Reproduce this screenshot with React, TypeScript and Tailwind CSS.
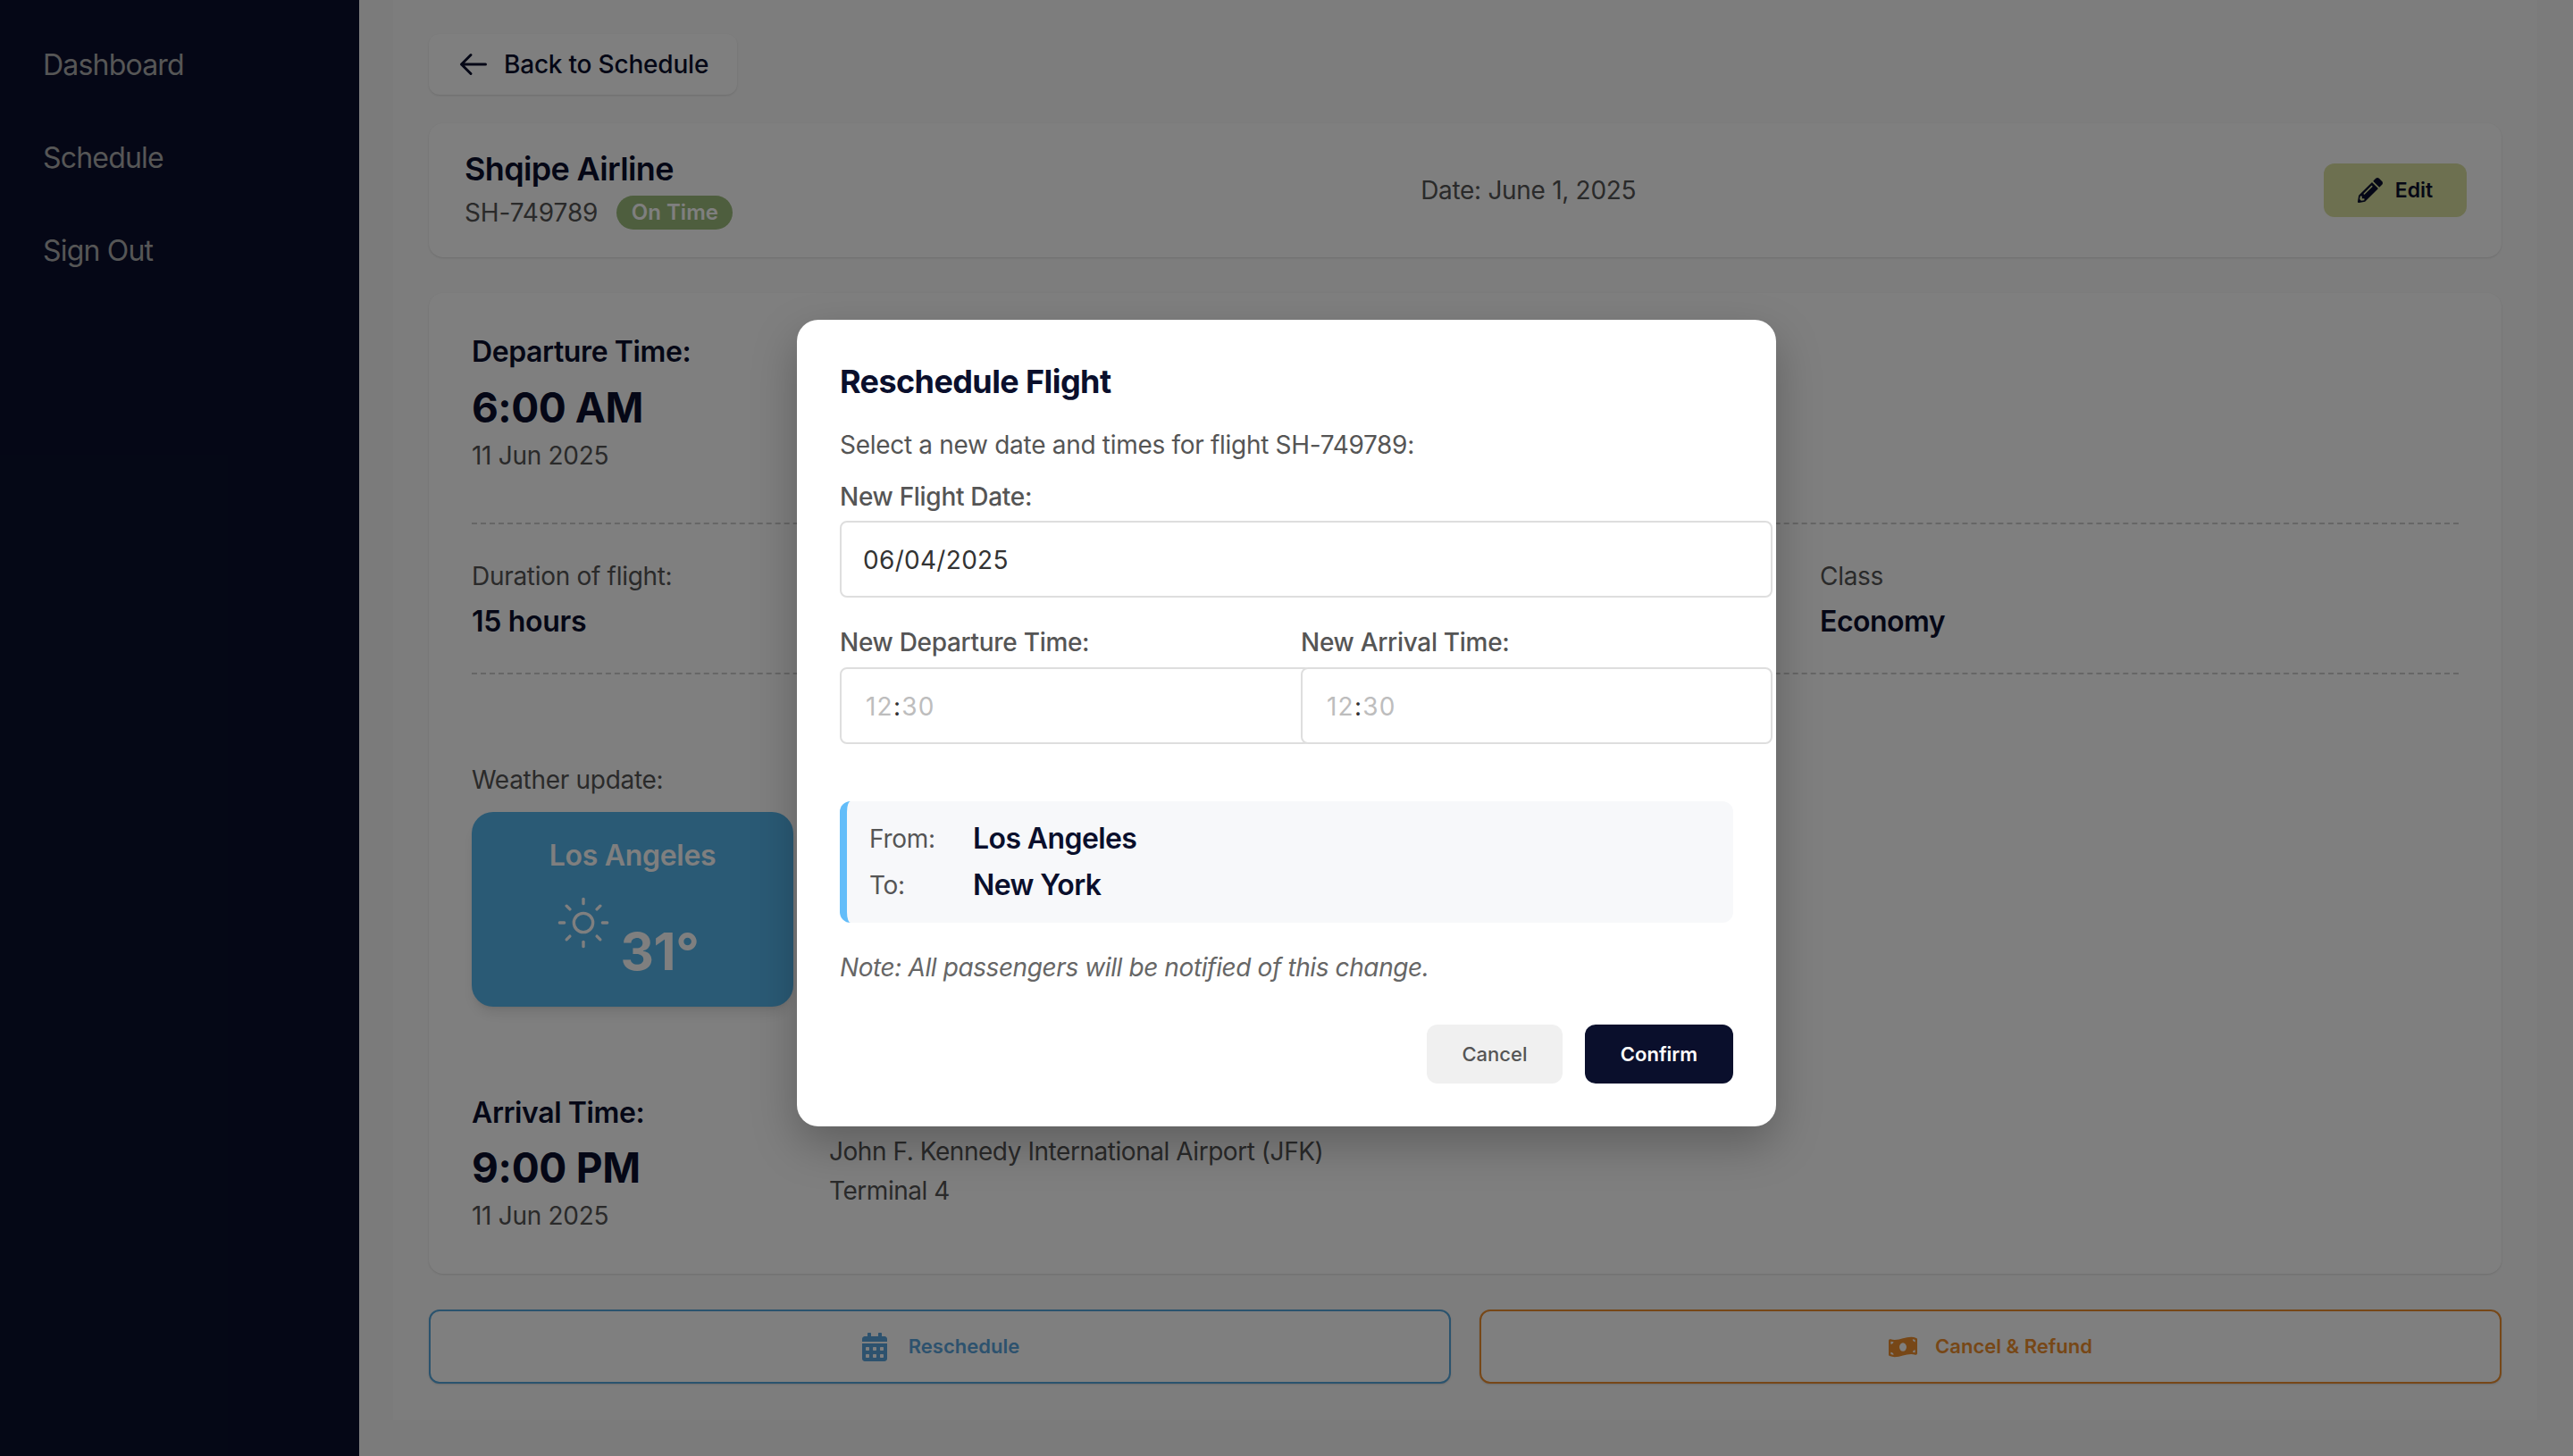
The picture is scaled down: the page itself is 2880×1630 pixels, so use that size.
import { Sun } from 'lucide-react';
import { FaCalendarAlt, FaMoneyBillWave, FaPencilAlt } from 'react-icons/fa';
import { HiOutlineArrowLeft } from 'react-icons/hi';

const navItems = ['Dashboard', 'Schedule', 'Sign Out'];

const TimeField = () => (
  <div className="box-content h-[82px] w-full rounded-lg border-2 border-[#dedede] bg-white pl-[27px] pr-[13px] text-[28px] leading-[84px] tracking-[1.2px] text-[#bdbdbd]">
    12<span className="text-[#333]">:</span>30
  </div>
);

const RescheduleModal = () => (
  <div className="absolute inset-0 flex items-center justify-center bg-black/50 pb-[11px]">
    <div className="w-[1096px] rounded-3xl bg-white px-12 pb-12 pt-[47px] shadow-[0_20px_50px_rgba(0,0,0,0.25)]">
      <h2 className="text-[36px] font-bold leading-[44px] tracking-[-0.6px] text-[#0a0f2c]">Reschedule Flight</h2>
      <p className="mt-[31px] text-[28px] leading-9 text-[#555]">Select a new date and times for flight SH-749789:</p>
      <div className="mt-[22px] text-[28px] font-medium leading-9 text-[#555]">New Flight Date:</div>
      <div className="mt-[9px] box-content h-[82px] w-full rounded-lg border-2 border-[#dedede] pl-6 pr-4 text-[28px] leading-[84px] tracking-[0.3px] text-[#333]">
        06/04/2025
      </div>
      <div className="mt-8 grid grid-cols-2 gap-x-8">
        <div>
          <div className="text-[28px] font-medium leading-9 text-[#555]">New Departure Time:</div>
          <div className="mt-[10px]">
            <TimeField />
          </div>
        </div>
        <div className="relative">
          <div className="text-[28px] font-medium leading-9 text-[#555]">New Arrival Time:</div>
          <div className="mt-[10px]">
            <TimeField />
          </div>
        </div>
      </div>
      <div className="mt-16 rounded-xl border-l-8 border-[#63bdf9] bg-[#f7f8fa] pb-[22px] pl-[25px] pt-[22px]">
        <div className="flex items-center">
          <span className="w-[116px] text-[28px] leading-10 text-[#555]">From:</span>
          <span className="text-[32px] font-semibold leading-10 tracking-[-0.6px] text-[#0a0f2c]">Los Angeles</span>
        </div>
        <div className="mt-3 flex items-center">
          <span className="w-[116px] text-[28px] leading-10 text-[#555]">To:</span>
          <span className="text-[32px] font-semibold leading-10 tracking-[-0.6px] text-[#0a0f2c]">New York</span>
        </div>
      </div>
      <p className="mt-8 text-[28px] italic leading-9 tracking-[-0.4px] text-[#666]">Note: All passengers will be notified of this change.</p>
      <div className="mt-[46px] flex justify-end gap-[25px]">
        <button className="h-[66px] w-[152px] rounded-xl bg-[#f0f0f0] text-[22px] font-medium tracking-normal text-[#555]">Cancel</button>
        <button className="h-[66px] w-[166px] rounded-xl bg-[#0a0f2c] text-[22px] font-semibold tracking-normal text-white">Confirm</button>
      </div>
    </div>
  </div>
);

export default function App() {
  return (
    <div className="relative flex h-[1630px] w-full overflow-hidden bg-[#f6f6f6] tracking-[-0.3px] [font-family:Inter,sans-serif]">
      <aside className="flex w-[402px] shrink-0 flex-col gap-[62px] bg-[#0a0f2c] pl-12 pt-[52px]">
        {navItems.map((item) => (
          <a key={item} className="text-[32px] leading-[42px] tracking-[-0.8px] text-[#acacac]">
            {item}
          </a>
        ))}
      </aside>

      <main className="flex-1 pl-[38px] pr-10">
        <div className="h-[1590px] bg-[#fbfbfb] px-10 pt-[38px]">
          <button className="flex h-[68px] w-[345px] items-center gap-[16px] rounded-xl bg-white pl-[32px] text-[28px] font-medium tracking-[-0.2px] text-[#0a0f2c] shadow-sm">
            <HiOutlineArrowLeft size={36} />
            Back to Schedule
          </button>

          <section className="mt-8 flex h-[150px] items-center justify-between rounded-2xl bg-white pl-10 pr-[39px] shadow-sm">
            <div>
              <h1 className="-mt-[2px] text-[36px] font-semibold leading-[44px] tracking-[-0.65px] text-[#0a0f2c]">Shqipe Airline</h1>
              <div className="mt-[8px] flex h-[38px] items-center gap-[21px]">
                <span className="text-[28px] tracking-[-0.1px] text-[#555]">SH-749789</span>
                <span className="flex h-[38px] w-[130px] items-center justify-center rounded-full bg-[#9cbc7c] text-2xl font-semibold tracking-normal text-white">
                  On Time
                </span>
              </div>
            </div>
            <div className="text-[28px] text-[#555]">Date: June 1, 2025</div>
            <button className="flex h-[60px] w-[160px] items-center justify-center gap-[14px] rounded-xl bg-[#dae0a0] text-[23px] font-semibold tracking-normal text-[#0a0f2c]">
              <FaPencilAlt size={28} />
              Edit
            </button>
          </section>

          <section className="mt-10 h-[1098px] rounded-2xl bg-white px-12 pt-[46px] shadow-sm">
            <div className="border-b-2 border-dashed border-[#ccc] pb-[57px]">
              <div className="text-[32px] font-semibold leading-10 tracking-[-0.4px] text-[#0a0f2c]">Departure Time:</div>
              <div className="mt-3 text-[46px] font-bold leading-[60px] tracking-[-0.5px] text-[#0a0f2c]">6:00 AM</div>
              <div className="mt-[6px] text-[28px] leading-9 text-[#555]">11 Jun 2025</div>
            </div>

            <div className="grid grid-cols-[1509px_1fr] border-b-2 border-dashed border-[#ccc] pb-[37px] pt-10">
              <div>
                <div className="text-[28px] leading-9 text-[#555]">Duration of flight:</div>
                <div className="mt-[13px] text-[32px] font-semibold leading-10 text-[#0a0f2c]">15 hours</div>
              </div>
              <div>
                <div className="text-[28px] leading-9 text-[#555]">Class</div>
                <div className="mt-[13px] text-[32px] font-semibold leading-10 tracking-[-0.5px] text-[#0a0f2c]">Economy</div>
              </div>
            </div>

            <div className="mt-[100px] text-[28px] leading-9 text-[#555]">Weather update:</div>
            <div className="mt-[18px] flex h-[218px] w-[360px] flex-col items-center rounded-3xl bg-[#54b4ea] pt-[29px] text-white shadow-lg">
              <div className="text-[32px] font-semibold leading-10">Los Angeles</div>
              <div className="mt-[27px] flex items-start gap-[13px] pr-2">
                <Sun size={64} strokeWidth={1.25} className="-m-1" />
                <span className="mt-[26px] text-[58px] font-bold leading-[68px]">31°</span>
              </div>
            </div>

            <div className="mt-[99px] grid grid-cols-[400px_1fr]">
              <div>
                <div className="text-[32px] font-semibold leading-10 tracking-[-0.4px] text-[#0a0f2c]">Arrival Time:</div>
                <div className="mt-[11px] text-[46px] font-bold leading-[60px] text-[#0a0f2c]">9:00 PM</div>
                <div className="mt-[6px] text-[28px] leading-9 text-[#555]">11 Jun 2025</div>
              </div>
              <div className="pt-[45px] text-[28px] leading-9 tracking-[-0.45px] text-[#555]">
                <div>John F. Kennedy International Airport (JFK)</div>
                <div className="mt-2">Terminal 4</div>
              </div>
            </div>
          </section>

          <div className="mt-10 grid grid-cols-2 gap-8">
            <button className="flex h-[83px] items-center justify-center gap-[22px] rounded-xl border-2 border-[#54a6dc] bg-white text-[22px] font-semibold tracking-normal text-[#5aa5dc] shadow-sm">
              <FaCalendarAlt size={32} />
              Reschedule
            </button>
            <button className="flex h-[83px] items-center justify-center gap-[20px] rounded-xl border-2 border-[#ee8f2e] bg-white text-[22px] font-semibold tracking-normal text-[#ee8f2e] shadow-sm">
              <FaMoneyBillWave size={32} />
              Cancel &amp; Refund
            </button>
          </div>
        </div>
      </main>

      <RescheduleModal />
    </div>
  );
}
